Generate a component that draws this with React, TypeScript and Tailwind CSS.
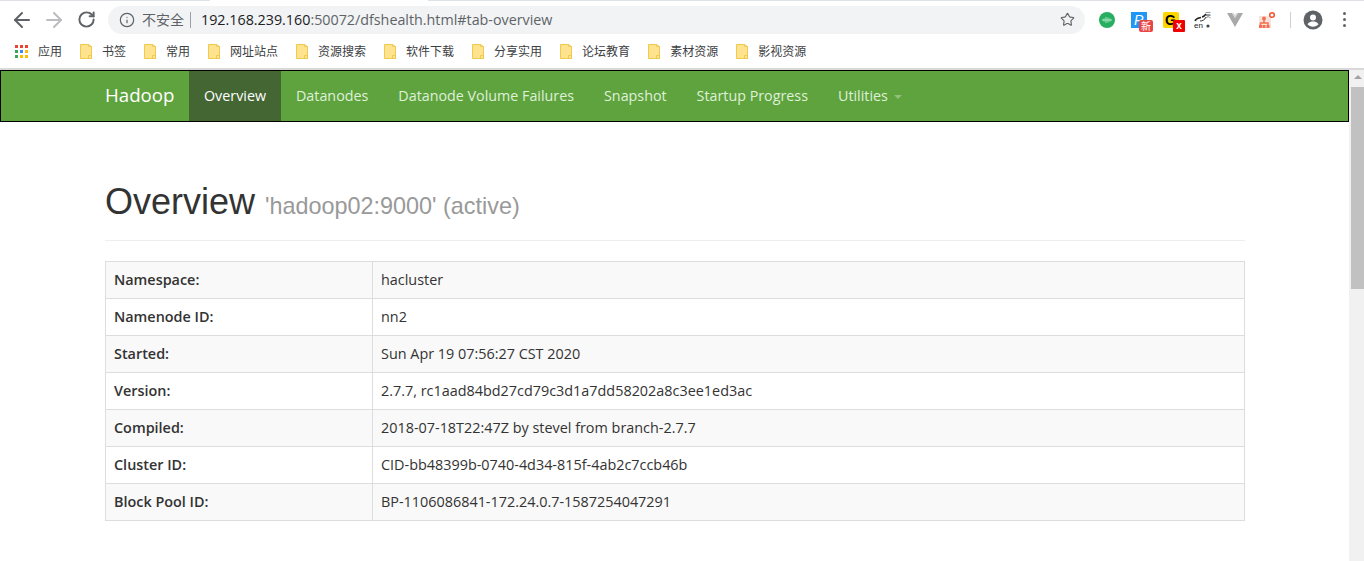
import { ArrowLeft, ArrowRight, RotateCw, Info, Star } from "lucide-react";

const BOOKMARKS = ["书签", "常用", "网址站点", "资源搜索", "软件下载", "分享实用", "论坛教育", "素材资源", "影视资源"];
const NAV = ["Datanodes", "Datanode Volume Failures", "Snapshot", "Startup Progress"];
const ROWS = [
  ["Namespace:", "hacluster"],
  ["Namenode ID:", "nn2"],
  ["Started:", "Sun Apr 19 07:56:27 CST 2020"],
  ["Version:", "2.7.7, rc1aad84bd27cd79c3d1a7dd58202a8c3ee1ed3ac"],
  ["Compiled:", "2018-07-18T22:47Z by stevel from branch-2.7.7"],
  ["Cluster ID:", "CID-bb48399b-0740-4d34-815f-4ab2c7ccb46b"],
  ["Block Pool ID:", "BP-1106086841-172.24.0.7-1587254047291"],
];
const APP_DOTS = ["#ea4335", "#ea4335", "#ea4335", "#34a853", "#4285f4", "#fbbc05", "#34a853", "#fbbc05", "#fbbc05"];

function Folder() {
  return (
    <svg width="12" height="15" viewBox="0 0 12 15" className="shrink-0">
      <path d="M.5.500h8v2h3v12h-11z" fill="#ffe38f" stroke="#f0c94f" />
      <path d="M8.500 11.500h3v3h-3z" fill="#ffe38f" stroke="#f0c94f" />
      <path d="M8.500.500l3 2" fill="none" stroke="#f0c94f" />
    </svg>
  );
}

function Extensions() {
  return (
    <div className="flex items-center">
      <div className="w-4 h-4 rounded-full bg-[#27ae60] flex items-center justify-center">
        <svg width="12" height="8" viewBox="0 0 12 8">
          <path d="M1 4h10M3 2.500v3M5 1v6M7 1.500v5M9 2.500v3" stroke="#a8e6c0" strokeWidth="1" />
        </svg>
      </div>
      <div className="relative w-4 h-4 ml-4 bg-[#2196f3] text-white text-[14px] leading-4 italic pl-[3px] font-['Liberation_Sans',sans-serif]">
        P
        <span className="absolute left-2 top-2 w-[14px] h-3 rounded-[2px] bg-[#e84545] text-[10px] leading-3 not-italic text-center font-['Noto_Sans_CJK_SC',sans-serif]">新</span>
      </div>
      <div className="relative w-4 h-4 ml-4 bg-[#ffd600] rounded-[2px] text-black font-bold text-[14px] leading-4 text-left pl-[2px] font-['Liberation_Sans',sans-serif]">
        G
        <span className="absolute left-[10px] top-2 w-3 h-3 rounded-[1px] bg-[#f00000] text-white text-[10px] leading-[11px] text-center">x</span>
      </div>
      <svg width="18" height="18" viewBox="0 0 18 18" className="ml-[14px]">
        <path d="M2 10c1-3 4-3 6-3.500M9 6c2-.5 3-1.500 4-3" fill="none" stroke="#222" strokeWidth="1.500" />
        <path d="M7 10c2 0 5-1 6-4" fill="none" stroke="#333" strokeWidth="1" />
        <text x="12" y="6" fontSize="6" fill="#666" fontFamily="Noto Sans CJK SC, sans-serif">英</text>
        <text x="1" y="17" fontSize="8" fill="#222" fontFamily="Liberation Sans, sans-serif">en</text>
        <circle cx="15" cy="15" r="1.600" fill="#444" />
      </svg>
      <svg width="16" height="14" viewBox="0 0 16 14" className="ml-[16px]">
        <path d="M0 0h5l3 5 3-5h5L8 14z" fill="#a9a9a9" />
        <path d="M5 0l3 5 3-5h-1.500L8 2.500 6.500 0z" fill="#d0d0d0" />
      </svg>
      <svg width="18" height="18" viewBox="0 0 18 18" className="ml-[15px]">
        <rect x="1" y="5" width="12" height="12" fill="#f6e3dc" />
        <circle cx="6" cy="7.500" r="2" fill="#f4704f" />
        <path d="M6 9v3M2.500 15v-3h7.500v3" fill="none" stroke="#f4704f" strokeWidth="1.500" />
        <path d="M1 14h3v3H1zM4.500 14h3v3h-3zM8.500 14h3v3h-3z" fill="#f4704f" />
        <circle cx="14" cy="4" r="2.300" fill="none" stroke="#f4512c" strokeWidth="1.500" />
      </svg>
    </div>
  );
}

function BrowserChrome() {
  return (
    <div className="h-[70px] shrink-0 bg-white border-b-2 border-[#d9d9d9] font-['Noto_Sans_CJK_SC',sans-serif]">
      <div className="h-px flex">
        <div className="w-[210px] bg-[#dee1e6]" />
        <div className="w-[218px]" />
        <div className="flex-1 bg-[#dee1e6]" />
      </div>
      <div className="h-[37px] flex items-center">
        <ArrowLeft size={24} strokeWidth={2} className="ml-[10px] text-[#5f6368]" />
        <ArrowRight size={24} strokeWidth={2} className="ml-[8px] text-[#bcbdbf]" />
        <RotateCw size={19} strokeWidth={2.500} className="ml-[11px] text-[#5f6368]" />
        <div className="ml-[12px] w-[977px] h-[28px] rounded-full bg-[#f1f3f4] flex items-center">
          <Info size={16} strokeWidth={1.800} className="ml-[11px] text-[#5f6368]" />
          <span className="ml-[7px] text-[14px] text-[#5f6368]">不安全</span>
          <span className="ml-[6px] w-px h-[16px] bg-[#9aa0a6]" />
          <span className="ml-[10px] text-[14.300px] text-[#5f6368] font-['Open_Sans',sans-serif]">
            <span className="text-[#202124]">192.168.239.160</span>:50072/dfshealth.html#tab-overview
          </span>
          <Star size={15} strokeWidth={1.800} className="ml-auto mr-[10px] text-[#5f6368]" />
        </div>
        <div className="ml-[14px]">
          <Extensions />
        </div>
        <span className="ml-[14px] w-px h-[16px] bg-[#cfd0d2]" />
        <svg width="20" height="20" viewBox="0 0 20 20" className="ml-[12px]">
          <circle cx="10" cy="10" r="9.500" fill="#5f6368" />
          <circle cx="10" cy="7.500" r="3" fill="#fff" />
          <path d="M4.500 14.200c1.500-2.200 3.700-2.700 5.500-2.700s4 .5 5.500 2.700c-1.300 1.600-3.300 2.500-5.500 2.500s-4.200-.9-5.500-2.500z" fill="#fff" />
        </svg>
        <div className="ml-[20px] flex flex-col gap-[3px]">
          <span className="w-[3px] h-[3px] rounded-full bg-[#5f6368]" />
          <span className="w-[3px] h-[3px] rounded-full bg-[#5f6368]" />
          <span className="w-[3px] h-[3px] rounded-full bg-[#5f6368]" />
        </div>
      </div>
      <div className="h-[28px] pb-[2px] flex items-center text-[12px] text-[#3c4043]">
        <div className="ml-[15px] grid grid-cols-3 gap-[2px] w-[13px]">
          {APP_DOTS.map((color, i) => (
            <span key={i} className="w-[3px] h-[3px]" style={{ backgroundColor: color }} />
          ))}
        </div>
        <span className="ml-[10px]">应用</span>
        {BOOKMARKS.map((name) => (
          <div key={name} className="ml-[18px] flex items-center gap-[10px]">
            <Folder />
            <span>{name}</span>
          </div>
        ))}
      </div>
    </div>
  );
}

export default function App() {
  return (
    <div className="h-[561px] overflow-hidden flex flex-col bg-white">
      <BrowserChrome />
      <div className="flex-1 flex min-h-0">
        <div className="flex-1 min-w-0 font-['Open_Sans',sans-serif] text-[14.400px] text-[#333]">
          <nav className="h-[52px] pb-px bg-[#5fa33e] border border-black flex pl-[104px] text-[14.300px] text-[#dff0d8]">
            <a className="w-[84px] text-[18.700px] text-white flex items-center">Hadoop</a>
            <a className="w-[92px] justify-center bg-[#446633] text-white flex items-center -mb-px pb-px">Overview</a>
            {NAV.map((item) => (
              <a key={item} className="flex items-center px-[15px]">{item}</a>
            ))}
            <a className="flex items-center px-[15px]">
              Utilities
              <span className="ml-[6px] mt-[2px] border-x-[4px] border-t-[4px] border-x-transparent border-t-[#8fbf78]" />
            </a>
          </nav>
          <div className="w-[1140px] ml-[105px]">
            <div className="pt-[60px] h-[119px] border-b border-[#eeeeee] font-['Liberation_Sans',sans-serif]">
              <h1 className="text-[36px] leading-[40px] font-normal">
                Overview <small className="text-[23.400px] text-[#999]">'hadoop02:9000' (active)</small>
              </h1>
            </div>
            <table className="mt-[20px] w-full border-collapse border border-[#dddddd]">
              <tbody>
                {ROWS.map(([label, value], i) => (
                  <tr key={label} className={i % 2 === 0 ? "bg-[#f9f9f9]" : "bg-white"}>
                    <th className="w-[267px] h-[37px] px-[8px] pb-px border border-[#dddddd] text-left font-semibold">{label}</th>
                    <td className="h-[37px] px-[8px] pb-px border border-[#dddddd]">{value}</td>
                  </tr>
                ))}
              </tbody>
            </table>
          </div>
        </div>
        <div className="w-[15px] shrink-0 pl-[2px] bg-[#f1f1f1] flex flex-col items-center">
          <span className="mt-[5px] border-x-[4px] border-b-[4px] border-x-transparent border-b-[#a3a3a3]" />
          <div className="mt-[8px] w-full h-[202px] bg-[#c1c1c1]" />
        </div>
      </div>
    </div>
  );
}
